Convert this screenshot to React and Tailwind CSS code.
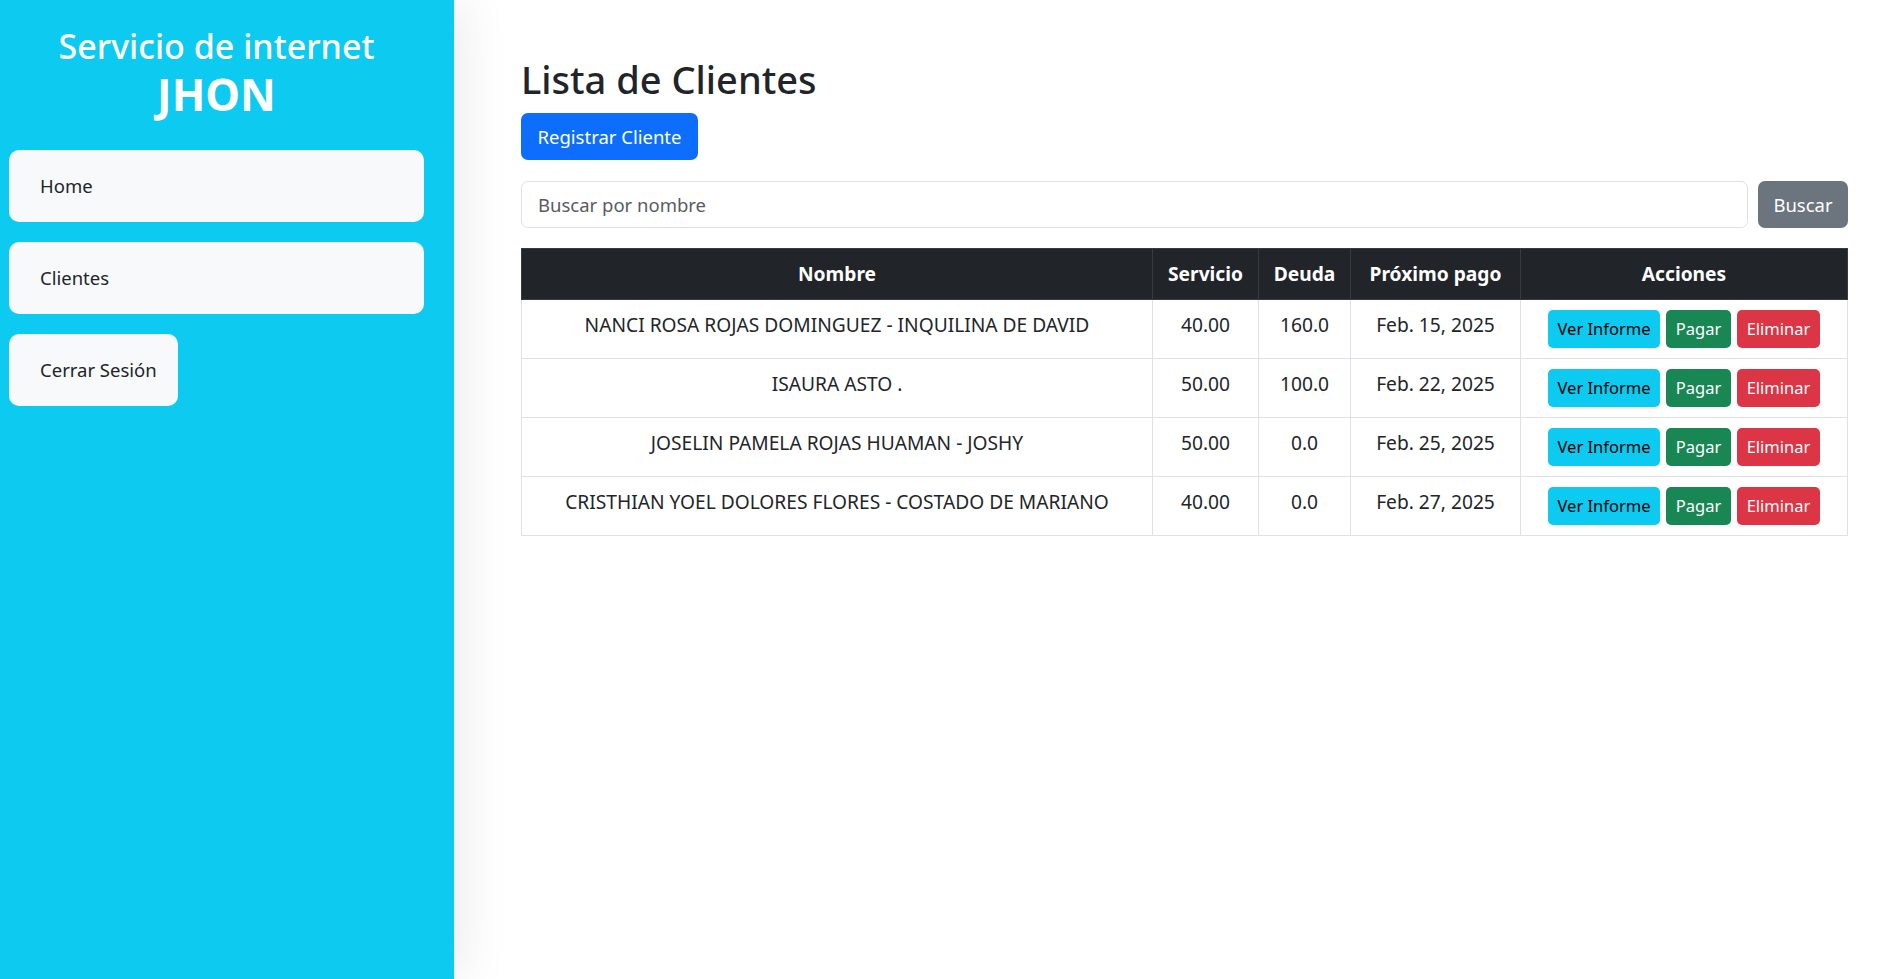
import React, { useState } from "react";

const clientes = [
  { id: 1, nombre: "NANCI ROSA ROJAS DOMINGUEZ - INQUILINA DE DAVID", servicio: "40.00", deuda: "160.0", pago: "Feb. 15, 2025" },
  { id: 2, nombre: "ISAURA ASTO .", servicio: "50.00", deuda: "100.0", pago: "Feb. 22, 2025" },
  { id: 3, nombre: "JOSELIN PAMELA ROJAS HUAMAN - JOSHY", servicio: "50.00", deuda: "0.0", pago: "Feb. 25, 2025" },
  { id: 4, nombre: "CRISTHIAN YOEL DOLORES FLORES - COSTADO DE MARIANO", servicio: "40.00", deuda: "0.0", pago: "Feb. 27, 2025" },
];

const Sidebar = () => {
  return (
    <aside className="relative z-10 w-[454px] shrink-0 bg-[#0dcaf0] pl-[9px] pr-[30px] pt-[23px] shadow-[6px_0_50px_rgba(0,0,0,0.09)]">
      <div className="text-center text-white">
        <div className="text-[34px] font-medium leading-[46px]">Servicio de internet</div>
        <div className="text-[44px] font-bold leading-[50px]">JHON</div>
      </div>

      <nav className="mt-[31px] flex flex-col items-start gap-5">
        <button className="h-[72px] w-full rounded-[10px] bg-[#f8f9fa] px-[31px] text-left text-[18.5px] text-[#212529]">
          Home
        </button>
        <button className="h-[72px] w-full rounded-[10px] bg-[#f8f9fa] px-[31px] text-left text-[18.5px] text-[#212529]">
          Clientes
        </button>
        <button className="h-[72px] w-[169px] rounded-[10px] bg-[#f8f9fa] pl-[31px] text-left text-[18.5px] text-[#212529]">
          Cerrar Sesión
        </button>
      </nav>
    </aside>
  );
};

const App = () => {
  const [busqueda, setBusqueda] = useState("");

  return (
    <div
      className="flex min-h-screen bg-white text-[#212529]"
      style={{ fontFamily: "'Noto Sans', 'Open Sans', sans-serif" }}
    >
      <Sidebar />

      <main className="flex-1 pl-[67px] pr-[30px] pt-[56px]">
        <h1 className="mb-[10px] text-[38px] font-medium leading-[47px]">Lista de Clientes</h1>

        <button className="h-[47px] w-[177px] rounded-[7px] bg-[#0d6efd] text-[18.5px] text-white">
          Registrar Cliente
        </button>

        {/* buscador */}
        <div className="mt-[21px] flex flex-row gap-[10px]">
          <input
            value={busqueda}
            onChange={(e) => setBusqueda(e.target.value)}
            placeholder="Buscar por nombre"
            className="h-[47px] flex-1 rounded-[7px] border border-[#dee2e6] px-[16px] text-[18.5px] outline-none placeholder:text-[#595c5f]"
          />
          <button className="h-[47px] w-[90px] rounded-[7px] bg-[#6c757d] text-[18.5px] text-white">
            Buscar
          </button>
        </div>

        <table className="mt-5 w-full table-fixed border-collapse text-center text-[19.2px] leading-[30px]">
          <thead>
            <tr className="bg-[#212529] text-white">
              <th className="w-[631px] border border-[#373b3e] py-[10px] font-bold">Nombre</th>
              <th className="w-[106px] border border-[#373b3e] py-[10px] font-bold">Servicio</th>
              <th className="w-[92px] border border-[#373b3e] py-[10px] font-bold">Deuda</th>
              <th className="w-[170px] border border-[#373b3e] py-[10px] font-bold">Próximo pago</th>
              <th className="border border-[#373b3e] py-[10px] font-bold">Acciones</th>
            </tr>
          </thead>
          <tbody>
            {clientes.map((c) => (
              <tr key={c.id}>
                <td className="border border-[#dee2e6] px-[10px] py-[10px] align-top">{c.nombre}</td>
                <td className="border border-[#dee2e6] py-[10px] align-top">{c.servicio}</td>
                <td className="border border-[#dee2e6] py-[10px] align-top">{c.deuda}</td>
                <td className="border border-[#dee2e6] py-[10px] align-top">{c.pago}</td>
                <td className="border border-[#dee2e6] py-[10px] align-top">
                  <div className="flex flex-row justify-center gap-[6px] text-[16.5px] leading-[26px]">
                    <button className="h-[38px] w-[112px] rounded-[5px] bg-[#0dcaf0] text-black">Ver Informe</button>
                    <button className="h-[38px] w-[65px] rounded-[5px] bg-[#198754] text-white">Pagar</button>
                    <button className="h-[38px] w-[83px] rounded-[5px] bg-[#dc3545] text-white">Eliminar</button>
                  </div>
                </td>
              </tr>
            ))}
          </tbody>
        </table>
      </main>
    </div>
  );
};

export default App;
